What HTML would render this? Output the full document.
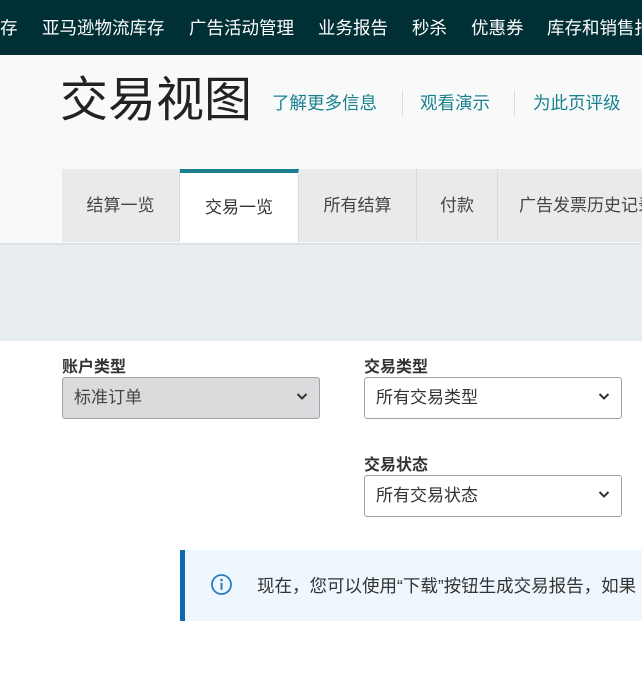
<!DOCTYPE html>
<html><head><meta charset="utf-8"><style>
*{margin:0;padding:0;box-sizing:border-box}
body{width:642px;height:676px;overflow:hidden;background:#fff;font-family:"Liberation Sans","Noto Sans CJK SC",sans-serif;position:relative;color:#222}
.a{position:absolute;white-space:nowrap}
.nav{left:0;top:0;width:642px;height:55px;background:#002f36}
.nav span{position:absolute;top:15px;color:#fff;font-size:17.5px}
.hdr{left:0;top:55px;width:642px;height:190px;background:#f8f9f9}
.tab{top:169px;height:73px;background:#e8eaeb;border-right:1px solid #d8dadb;font-size:17px;color:#444;line-height:73px;text-align:center}
.lnk{top:90px;font-size:17.5px;color:#1a8190}
.sep{top:90px;width:1px;height:26px;background:#ddd}
.lbl{font-size:16px;font-weight:bold;color:#333}
.sel{width:258px;height:42px;border:1px solid #a0a4a6;border-radius:3px;font-size:17px;line-height:40px;padding-left:11px;color:#333}
.sel svg{position:absolute;right:11px;top:14px}
</style></head><body>
<div class="a nav">
<span style="left:0">存</span><span style="left:42px">亚马逊物流库存</span><span style="left:189px">广告活动管理</span><span style="left:318px">业务报告</span><span style="left:412px">秒杀</span><span style="left:471px">优惠券</span><span style="left:547px">库存和销售报告</span>
</div>
<div class="a hdr"></div>
<div class="a" style="left:60px;top:72px;font-size:48px;color:#222;line-height:58px">交易视图</div>
<div class="a lnk" style="left:272px">了解更多信息</div>
<div class="a sep" style="left:402px"></div>
<div class="a lnk" style="left:420px">观看演示</div>
<div class="a sep" style="left:514px"></div>
<div class="a lnk" style="left:533px">为此页评级</div>
<div class="a tab" style="left:62px;width:118px">结算一览</div>
<div class="a tab" style="left:180px;width:119px;background:#fff;border-top:4px solid #1b7f8c;line-height:69px;color:#333">交易一览</div>
<div class="a tab" style="left:299px;width:118px">所有结算</div>
<div class="a tab" style="left:417px;width:81px">付款</div>
<div class="a tab" style="left:498px;width:160px;text-align:left;padding-left:21px">广告发票历史记录</div>
<div class="a" style="left:0;top:243px;width:642px;height:2px;background:#dde2e4"></div>
<div class="a" style="left:0;top:245px;width:642px;height:96px;background:#e8eef0"></div>
<div class="a lbl" style="left:62px;top:353px">账户类型</div>
<div class="a sel" style="left:62px;top:377px;background:#d9dbdc;color:#444">标准订单<svg width="12" height="9" viewBox="0 0 12 9"><path d="M1.5 2l4.5 4.5L10.5 2" stroke="#333" stroke-width="2" fill="none"/></svg></div>
<div class="a lbl" style="left:364px;top:353px">交易类型</div>
<div class="a sel" style="left:364px;top:377px;background:#fff">所有交易类型<svg width="12" height="9" viewBox="0 0 12 9"><path d="M1.5 2l4.5 4.5L10.5 2" stroke="#333" stroke-width="2" fill="none"/></svg></div>
<div class="a lbl" style="left:364px;top:451px">交易状态</div>
<div class="a sel" style="left:364px;top:475px;background:#fff">所有交易状态<svg width="12" height="9" viewBox="0 0 12 9"><path d="M1.5 2l4.5 4.5L10.5 2" stroke="#333" stroke-width="2" fill="none"/></svg></div>
<div class="a" style="left:180px;top:550px;width:462px;height:71px;background:#eef7fd;border-left:5px solid #0b6aae"></div>
<svg class="a" style="left:210px;top:573px" width="23" height="23" viewBox="0 0 23 23"><circle cx="11.5" cy="11.5" r="9.5" stroke="#2a7cc0" stroke-width="1.8" fill="none"/><circle cx="11.5" cy="7" r="1.3" fill="#2a7cc0"/><rect x="10.5" y="9.8" width="2" height="7" fill="#2a7cc0"/></svg>
<div class="a" style="left:257px;top:573px;font-size:17.5px;color:#333">现在，您可以使用“下载”按钮生成交易报告，如果</div>
</body></html>
